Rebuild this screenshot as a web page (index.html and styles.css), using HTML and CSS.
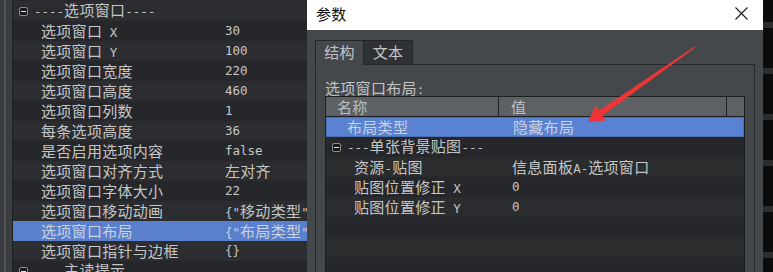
FILE: index.html
```html
<!DOCTYPE html>
<html lang="zh-CN">
<head>
    <meta charset="UTF-8">
    <title>参数</title>
    <link rel="stylesheet" href="styles.css">
</head>
<body>
    <div class="screen">
        <div class="props">
            <div class="gutter"></div>
            <div class="list">
                <div class="row group"><span class="toggle"></span><span class="gname"><span class="lat">----</span>选项窗口<span class="lat">----</span></span></div>
                <div class="row"><span class="name">选项窗口<span class="lat"> X</span></span><span class="value lat">30</span></div>
                <div class="row"><span class="name">选项窗口<span class="lat"> Y</span></span><span class="value lat">100</span></div>
                <div class="row"><span class="name">选项窗口宽度</span><span class="value lat">220</span></div>
                <div class="row"><span class="name">选项窗口高度</span><span class="value lat">460</span></div>
                <div class="row"><span class="name">选项窗口列数</span><span class="value lat">1</span></div>
                <div class="row"><span class="name">每条选项高度</span><span class="value lat">36</span></div>
                <div class="row"><span class="name">是否启用选项内容</span><span class="value lat">false</span></div>
                <div class="row"><span class="name">选项窗口对齐方式</span><span class="value">左对齐</span></div>
                <div class="row"><span class="name">选项窗口字体大小</span><span class="value lat">22</span></div>
                <div class="row"><span class="name">选项窗口移动动画</span><span class="value"><span class="lat">{"</span>移动类型<span class="lat">"</span></span></div>
                <div class="row selected"><span class="name">选项窗口布局</span><span class="value"><span class="lat">{"</span>布局类型<span class="lat">"</span></span></div>
                <div class="row"><span class="name">选项窗口指针与边框</span><span class="value lat">{}</span></div>
                <div class="row group"><span class="toggle"></span><span class="gname"><span class="lat">----</span>主读提示<span class="lat">----</span></span></div>
            </div>
        </div>

        <div class="dialog">
            <div class="titlebar">
                <span class="title">参数</span>
                <svg class="close" width="13" height="13" viewBox="0 0 13 13">
                    <path d="M0.5 0.5 L12.5 12.5 M12.5 0.5 L0.5 12.5" stroke="#1a1a1a" stroke-width="1.1" fill="none"/>
                </svg>
            </div>
            <div class="body">
                <div class="tabs">
                    <div class="tab active">结构</div>
                    <div class="tab">文本</div>
                </div>
                <div class="tabpanel">
                    <div class="caption">选项窗口布局<span class="lat">:</span></div>
                    <div class="table">
                        <div class="thead">
                            <div class="th col-name">名称</div>
                            <div class="th col-value">值</div>
                            <div class="th col-end"></div>
                        </div>
                        <div class="trow selected"><span class="tname top">布局类型</span><span class="tval">隐藏布局</span></div>
                        <div class="trow group"><span class="toggle"></span><span class="gname"><span class="lat">---</span>单张背景贴图<span class="lat">---</span></span></div>
                        <div class="trow"><span class="tname">资源<span class="lat">-</span>贴图</span><span class="tval">信息面板<span class="lat">A-</span>选项窗口</span></div>
                        <div class="trow"><span class="tname">贴图位置修正<span class="lat"> X</span></span><span class="tval lat">0</span></div>
                        <div class="trow"><span class="tname">贴图位置修正<span class="lat"> Y</span></span><span class="tval lat">0</span></div>
                        <div class="trow"></div>
                        <div class="trow"></div>
                        <div class="trow"></div>
                    </div>
                </div>
            </div>
        </div>

        <div class="edge"></div>

        <svg class="arrow" width="773" height="272" viewBox="0 0 773 272">
            <polygon points="695.4,47.5 602.5,115.5 606,120.5 588,122 595.6,105.6 599.1,110.5 694.6,46.5" fill="#ee3535"/>
        </svg>
    </div>
</body>
</html>
```

FILE: styles.css
```css
*{
    margin: 0;
    padding: 0;
    box-sizing: border-box;
}
body{
    width: 773px;
    height: 272px;
    overflow: hidden;
    background: #1e1f21;
    font-family: "Noto Sans CJK SC", sans-serif;
    font-size: 15px;
    letter-spacing: 0.3px;
    color: #c6c6c6;
}
.lat{
    font-family: "DejaVu Sans Mono", monospace;
    font-size: 12.5px;
    letter-spacing: 0;
}
.screen{
    position: relative;
    display: flex;
    width: 773px;
    height: 272px;
    overflow: hidden;
}

/* left property list */
.props{
    width: 307px;
    display: flex;
    background: #26282b;
}
.gutter{
    width: 13px;
    background: linear-gradient(90deg, #3a3c3f 0 4px, #505356 4px 6px, #3b3e41 6px 12px, #1d1f21 12px 13px);
}
.list{
    flex: 1;
    padding-top: 1px;
    overflow: hidden;
}
.row{
    height: 20px;
    line-height: 20px;
    display: grid;
    grid-template-columns: 212px 1fr;
    background: #2b2d30;
    white-space: nowrap;
}
.row:nth-child(even){
    background: #25272a;
}
.row .name{
    padding-left: 28px;
}
.row .value{
    overflow: hidden;
}
.row.selected{
    background: #5a7fcd;
    color: #cbd3e2;
}
.row.group{
    display: flex;
    align-items: center;
    padding-left: 6px;
    gap: 6px;
}
.toggle{
    width: 9px;
    height: 9px;
    border: 1px solid #8c8c8c;
    border-radius: 2px;
    background: #18191b;
    position: relative;
    flex-shrink: 0;
}
.toggle::after{
    content: "";
    position: absolute;
    left: 1px;
    right: 1px;
    top: 3px;
    height: 1px;
    background: #e0e0e0;
}

/* dialog */
.dialog{
    width: 456px;
    display: flex;
    flex-direction: column;
    background: #45484b;
}
.titlebar{
    height: 30px;
    background: #ffffff;
    display: flex;
    align-items: center;
    justify-content: space-between;
    padding: 0 15px 4px 9px;
    color: #111;
}
.title{
    font-size: 15px;
}
.body{
    flex: 1;
    padding: 10px 8px 0 8px;
    display: flex;
    flex-direction: column;
    overflow: hidden;
}
.tabs{
    display: flex;
    height: 25px;
}
.tab{
    width: 49px;
    height: 24px;
    line-height: 22px;
    text-align: center;
    border: 1px solid #232527;
    border-bottom: none;
    background: #2f3134;
    color: #c8c8c8;
}
.tab.active{
    height: 25px;
    background: #45484b;
    color: #c0c4c8;
    position: relative;
    z-index: 1;
}
.tab + .tab{
    border-left: none;
}
.tabpanel{
    flex: 1;
    margin-top: -1px;
    border: 1px solid #27292b;
    border-bottom: none;
    padding: 15px 10px 0 9px;
}
.caption{
    height: 16px;
    line-height: 16px;
    color: #c4c4c4;
}
.table{
    width: 420px;
    border: 1px solid #1d1f21;
    border-bottom: none;
    background: #26282a;
}
.thead{
    display: flex;
    height: 20px;
    background: #5d6164;
    border-bottom: 1px solid #1d1f21;
    color: #bcc0c4;
    line-height: 19px;
}
.th.col-name{
    width: 173px;
    padding-left: 11px;
    border-right: 1px solid #1d1f21;
}
.th.col-value{
    width: 228px;
    padding-left: 12px;
    border-right: 1px solid #1d1f21;
}
.th.col-end{
    flex: 1;
}
.trow{
    height: 20px;
    line-height: 20px;
    display: grid;
    grid-template-columns: 186px 1fr;
    background: #2a2c2e;
    white-space: nowrap;
}
.trow:nth-child(odd){
    background: #25272a;
}
.trow .tname{
    padding-left: 28px;
}
.trow .tname.top{
    padding-left: 20px;
}
.trow.selected{
    background: #5a82d2;
    border: 1px solid #4d70b4;
    line-height: 18px;
    color: #c9d2e4;
}
.trow.group{
    display: flex;
    align-items: center;
    padding-left: 6px;
    gap: 6px;
}

/* edge of the window behind */
.edge{
    width: 10px;
    background: repeating-linear-gradient(180deg, #0c0c0c 0 22px, #2a2c2e 22px 28px, #0c0c0c 28px 46px);
}

.arrow{
    position: absolute;
    left: 0;
    top: 0;
    pointer-events: none;
}
```
